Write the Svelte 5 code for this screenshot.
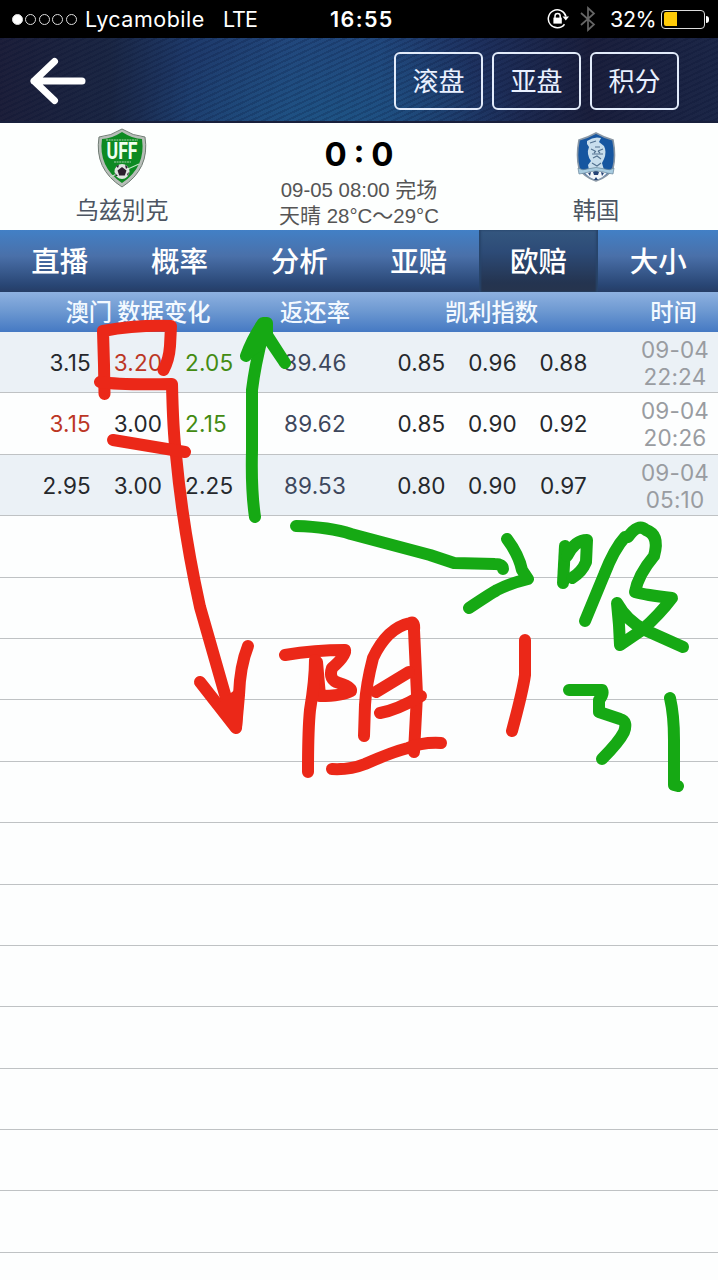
<script>
  const tabs = ['直播', '概率', '分析', '亚赔', '欧赔', '大小'];
  const active = '欧赔';
  const actions = ['滚盘', '亚盘', '积分'];
  const rows = [
    { odds: ['3.15', '3.20', '2.05'], tone: ['', 'up', 'down'], back: '89.46', kelly: ['0.85', '0.96', '0.88'], day: '09-04', time: '22:24' },
    { odds: ['3.15', '3.00', '2.15'], tone: ['up', '', 'down'], back: '89.62', kelly: ['0.85', '0.90', '0.92'], day: '09-04', time: '20:26' },
    { odds: ['2.95', '3.00', '2.25'], tone: ['', '', ''], back: '89.53', kelly: ['0.80', '0.90', '0.97'], day: '09-04', time: '05:10' }
  ];
  const blanks = Array.from({ length: 13 });
  const red = [
    'M104.5 394L104 365L103 331Q135 325 171 326L170 346Q169 360 163.5 370',
    'M100 382Q120 385 172 384Q173 430 176 455Q183 530 200 607L230 712',
    'M113 440L185 452',
    'M200 682L236 728L239 695Q240 666 248 646'
  ];
  const redWord = [
    'M285 655Q315 650 345 650Q347 655 332 668Q328 680 339 683Q352 687 351 691Q342 696 320 696L317 662',
    'M315 660Q315 680 310 710Q308 730 308 772',
    'M364 736L365 705Q366 685 373 658Q387 628 410 623Q415 621 414 630L417 695L414 752',
    'M376 692L409 672',
    'M380 713Q397 710 421 696',
    'M332 769Q350 770 365 764Q392 752 408 748Q422 742 441 743',
    'M525 640L525 675Q523 690 512 731'
  ];
  const green = [
    'M255 517Q251 490 252 450L252 390Q255 365 263 334',
    'M296 526Q330 527 351 534L430 555L454 563L495 564Q503 564 503 569',
    'M507 539Q519 555 522 570L528 579Q511 583 497 590Q490 594 469 608'
  ];
  const greenWord = [
    'M565 546L563 583',
    'M567 556Q575 540 587 540L586 562Q582 572 572 578',
    'M625 537Q614 549 604 575L585 621',
    'M628 537Q638 523 646 530Q660 535 654 556Q638 575 635 592Q645 595 672 598Q660 614 642 630L620 645L619 625L617 603Q627 621 645 630L683 647',
    'M569 690L602 690Q604 694 599 700L599 712L620 719Q628 721 624 732Q619 742 602 759',
    'M670 698Q674 715 674 740L674 785L678 786'
  ];
</script>

<main class="screen">
  <div class="status">
    <div class="signal"><i class="on"></i><i></i><i></i><i></i><i></i></div>
    <span class="carrier">Lycamobile</span>
    <span class="net">LTE</span>
    <span class="clock">16:55</span>
    <svg class="lock" width="24" height="22" viewBox="0 0 24 22" fill="none" stroke="#fff" stroke-width="1.5">
      <path d="M17.5 16.2A9 9 0 1 1 19 8.5" />
      <path d="M15.5 8.5H22L18.8 12.4Z" fill="#fff" stroke="none" />
      <rect x="6.4" y="9.6" width="8.4" height="6" fill="#fff" stroke="none" />
      <path d="M8 10V8a2.6 2.6 0 0 1 5.2 0v2" />
    </svg>
    <svg class="bt" width="16" height="26" viewBox="0 0 16 26" fill="none" stroke="#666" stroke-width="1.7">
      <path d="M1 7L14 18.5L8 24V2L14 7.5L1 19" />
    </svg>
    <span class="percent">32%</span>
    <div class="battery"><i></i></div>
    <b class="nub"></b>
  </div>

  <header>
    <svg class="back" width="56" height="48" viewBox="0 0 56 48" fill="none" stroke="#fff" stroke-width="7" stroke-linecap="round" stroke-linejoin="round">
      <path d="M24.5 4.5L4 24L24.5 43.5M4 24H52" />
    </svg>
    <div class="actions">
      {#each actions as a}<button>{a}</button>{/each}
    </div>
  </header>

  <section class="match">
    <div class="team home">
      <svg width="50" height="60" viewBox="0 0 50 60">
        <path d="M25 1Q36 8 48 9Q53 41 25 59Q-3 41 2 9Q14 8 25 1Z" fill="#b7beb8" stroke="#707c74" />
        <path d="M25 4Q36 11 45 11Q49 39 25 55Q1 39 5 11Q14 11 25 4Z" fill="#0d8a22" />
        <path d="M9 12H41M17 34H34" stroke="#a6d0a9" stroke-width="1.2" stroke-dasharray="2 .6" />
        <text x="25" y="31" text-anchor="middle" font-size="23" font-weight="700" textLength="31" lengthAdjust="spacingAndGlyphs" fill="#f0fff0">UFF</text>
        <path d="M13 49L42 36" stroke="#bfe5c2" stroke-width="1.2" />
        <circle cx="25" cy="43.5" r="7.5" fill="#dfe5e0" />
        <path d="M25 39L29.5 42.4L27.8 47.5H22.2L20.5 42.4ZM19 38L22 37L21 40ZM28 37L31 39L29 41ZM18 45L21 48L19 48ZM30 46L32 44L31 48Z" fill="#2b1e2e" />
      </svg>
      <span>乌兹别克</span>
    </div>
    <div class="result">
      <div class="score">0 : 0</div>
      <p>09-05 08:00 <em>完场</em></p>
      <p><em>天晴</em> 28°C<em>～</em>29°C</p>
    </div>
    <div class="team away">
      <svg width="40" height="50" viewBox="0 0 40 50">
        <path d="M20 1Q29 6 37 8Q40 24 37 36Q32 45 20 49Q8 45 3 36Q0 24 3 8Q11 6 20 1Z" fill="#1656a0" stroke="#8997a5" stroke-width="1.6" />
        <path d="M11 9Q18 4 25 6L23 10L28 14Q31 20 28 27L26 31L28 38H13L12 33L15 29Q10 22 13 15L11 12Z" fill="#c8deed" />
        <path d="M14 11L20 9M15 17L19 19M27 17L22 19M16 22H27M17 26L21 24L25 27M16 31L21 34L25 31M19 15H24M18 21L20 19M24 21L22 19" stroke="#52718f" fill="none" stroke-width="1.1" />
        <path d="M9 41Q20 33 31 41Q27 46 20 48Q13 46 9 41Z" fill="#f2f5f8" />
        <path d="M17 40L20 38L23 40L22 43H18ZM12 41L15 40L14 44ZM28 41L25 40L26 44ZM18 48L20 45L22 48Z" fill="#254375" />
        <path d="M2 36Q7 39 11 37Q20 34 29 37Q34 39 38 36L37 42L31 41Q20 37 9 41L3 42Z" fill="#a8cce0" stroke="#658499" stroke-width=".7" />
      </svg>
      <span>韩国</span>
    </div>
  </section>

  <nav>
    {#each tabs as t}<div class:active={t === active}>{t}</div>{/each}
  </nav>

  <div class="heads">
    <span>澳门 数据变化</span><span>返还率</span><span>凯利指数</span><span>时间</span>
  </div>

  <div class="list">
    {#each rows as r, i}
      <div class="row" class:tint={i % 2 === 0}>
        {#each r.odds as o, k}<span class="odd {r.tone[k]}">{o}</span>{/each}
        <span class="ret">{r.back}</span>
        <span class="kelly">{#each r.kelly as k}<span>{k}</span>{/each}</span>
        <span class="when">{r.day}<br />{r.time}</span>
      </div>
    {/each}
    {#each blanks as _}<div class="row"></div>{/each}
  </div>

  <svg class="ink" width="718" height="1280" viewBox="0 0 718 1280" fill="none" stroke-linecap="round" stroke-linejoin="round">
    <g stroke="#16a914" stroke-width="12">
      {#each green as d}<path {d} />{/each}
      {#each greenWord as d}<path {d} />{/each}
      <path d="M246 356Q252 339 263 323L267 323L267 335L285 363L266 335L259 346L251 350Z" fill="#16a914" />
    </g>
    <g stroke="#eb2818" stroke-width="12">
      {#each red as d}<path {d} />{/each}
      {#each redWord as d}<path {d} />{/each}
      <path d="M224 706L236 727L238 695Z" fill="#eb2818" />
    </g>
  </svg>
</main>

<style>
  :global(body) { margin: 0; background: #fdfffe; }
  .screen {
    position: relative; width: 718px; height: 1280px; overflow: hidden;
    background: #fdfefe; color: #25282c;
    font-family: Inter, "Noto Sans CJK SC", sans-serif;
  }
  .status {
    height: 38px; background: #000; color: #fff; display: flex; align-items: center;
    font-size: 21.5px; line-height: 40px; box-sizing: border-box; padding-left: 12px; white-space: nowrap;
  }
  .status > * { flex: none; }
  .signal { display: flex; gap: 2.4px; width: 73px; }
  .signal i { box-sizing: border-box; width: 11px; height: 11px; border: 1px solid #ddd; border-radius: 50%; }
  .signal .on { background: #fff; }
  .carrier { width: 138px; letter-spacing: .5px; }
  .net { width: 107px; letter-spacing: -1px; }
  .clock { width: 217px; font-weight: 600; letter-spacing: 1.4px; }
  .lock { width: 24px; margin-right: 9px; }
  .bt { width: 16px; margin-right: 14px; }
  .percent { width: 51px; letter-spacing: -.4px; }
  .battery { box-sizing: border-box; width: 44px; height: 19px; border: 1.2px solid #ddd; border-radius: 4px; padding: 1.5px; display: flex; }
  .battery i { width: 13.5px; background: #ffcb08; border-radius: 2px 0 0 2px; }
  .nub { width: 3px; height: 7px; margin-left: 1px; background: #fff; border-radius: 0 3px 3px 0; }

  header {
    height: 85px; box-sizing: border-box; padding: 2px 39px 0 30px; display: flex; align-items: center; justify-content: space-between;
    border-bottom: 2px solid #18203c;
    background:
      repeating-linear-gradient(155deg, rgba(8, 24, 60, .2) 0 2px, rgba(50, 105, 160, .04) 2px 5px),
      radial-gradient(ellipse 190px 90px at 330px 85px, rgba(27, 91, 137, .6), transparent),
      linear-gradient(90deg, #1c1c36 0, #1a2440 110px, #1d3868 190px, #21457a 290px, #20457a 380px, #1d2e5b 480px, #1a1c38 590px, #1b2444 718px);
  }
  .actions { display: flex; gap: 9px; }
  button {
    box-sizing: border-box; width: 89px; height: 58px; border: 2px solid #e2ebfa; border-radius: 6px; background: none; color: #eaf1ff;
    font: 400 26px/1 "Noto Sans CJK SC", sans-serif; padding: 0 0 2px;
  }

  .match { height: 107px; display: grid; grid-template-columns: 244px 230px 244px; background: #fdfffe; }
  .team { display: flex; flex-direction: column; align-items: center; font-size: 23.3px; line-height: 30px; color: #4c5562; font-family: "Noto Sans CJK SC", sans-serif; }
  .home { padding-top: 5px; }
  .home span { margin-top: 6px; }
  .away { padding-top: 9px; }
  .away span { margin-top: 12px; }
  .home text { font-family: Roboto, sans-serif; }
  .result { text-align: center; color: #555; }
  .score { font-size: 33px; line-height: 40px; padding-top: 11px; color: #000; font-weight: 700; word-spacing: -1px; font-family: Inter, sans-serif; }
  .result p { margin: 0; font: 20.4px/26px "Liberation Sans", "Noto Sans CJK SC", sans-serif; white-space: nowrap; }
  .result p:first-of-type { margin-top: 3px; }
  em { font-style: normal; font-family: "Noto Sans CJK SC", sans-serif; font-size: 21px; line-height: 20px; }

  nav { height: 62px; display: grid; grid-template-columns: repeat(6, 1fr); background: linear-gradient(#4280c6, #4a70a9 42%, #284573 90%, #263d66); }
  nav div { text-align: center; color: #fff; font: 500 28.5px/60px "Noto Sans CJK SC", sans-serif; }
  .active { background: linear-gradient(#34577f, #2d4b77 35%, #243450 85%, #26344d); box-shadow: inset 2px 0 2px #28456b, inset -2px 0 2px #28456b; }

  .heads {
    height: 40px; display: grid; grid-template-columns: 276px 78px 275px 89px; text-align: center; color: #f3f9ff;
    font: 500 23.3px/38px "Noto Sans CJK SC", sans-serif; background: linear-gradient(#8eb1e0, #6f9ad2 45%, #4579c3);
  }
  .row {
    box-sizing: border-box; height: 61.4px; border-bottom: 1px solid #bfc2c4;
    display: grid; grid-template-columns: 91px 94px 75px 110px 262px 86px; align-items: center;
    font-size: 22.5px; line-height: 62px; letter-spacing: .2px; text-align: center;
  }
  .tint { background: #ebf1f6; }
  .odd:nth-child(1) { text-align: right; }
  .odd:nth-child(3) { text-align: left; }
  .up { color: #bc3725; }
  .down { color: #438b12; }
  .ret { color: #3d475c; }
  .kelly { display: grid; grid-template-columns: 71px 71px 71px; padding-left: 16px; }
  .when { color: #999ca1; line-height: 27px; }
  .ink { position: absolute; left: 0; top: 0; }
</style>
